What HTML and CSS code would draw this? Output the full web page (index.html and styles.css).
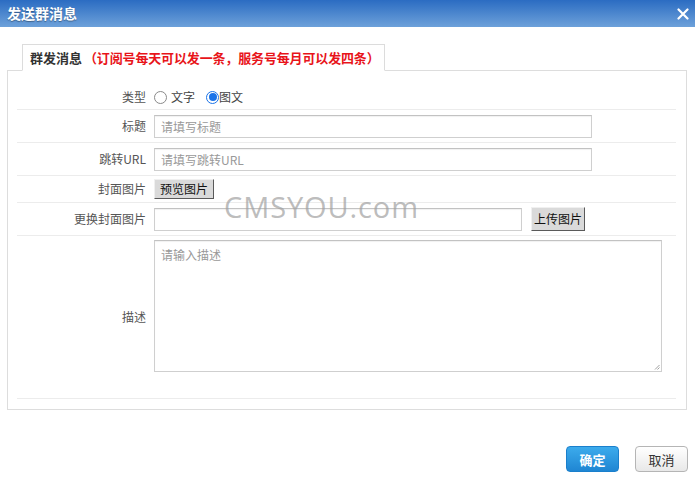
FILE: index.html
```html
<!DOCTYPE html>
<html lang="zh-CN">
<head>
<meta charset="utf-8">
<title>发送群消息</title>
<link rel="stylesheet" href="styles.css">
</head>
<body>
<div class="dialog">
  <div class="titlebar">
    <span class="title">发送群消息</span>
    <svg class="close" width="12" height="12" viewBox="0 0 12 12"><path d="M1.5 1.5 L10.5 10.5 M10.5 1.5 L1.5 10.5" stroke="#fff" stroke-width="2.2" stroke-linecap="round"/></svg>
  </div>
  <div class="body">
    <div class="tabs">
      <div class="tab"><b class="tab-name">群发消息</b><span class="tab-note">（订阅号每天可以发一条，服务号每月可以发四条）</span></div>
    </div>
    <div class="panel">
      <div class="row row-type">
        <div class="label">类型</div>
        <div class="field radios">
          <span class="radio"></span><span class="radio-text">文字</span>
          <span class="radio checked"></span><span class="radio-text tight">图文</span>
        </div>
      </div>
      <div class="row row-input">
        <div class="label">标题</div>
        <div class="field"><div class="input w438"><span class="ph">请填写标题</span></div></div>
      </div>
      <div class="row row-input">
        <div class="label">跳转URL</div>
        <div class="field"><div class="input w438"><span class="ph">请填写跳转URL</span></div></div>
      </div>
      <div class="row row-btn">
        <div class="label">封面图片</div>
        <div class="field"><span class="sysbtn">预览图片</span></div>
      </div>
      <div class="row row-input">
        <div class="label">更换封面图片</div>
        <div class="field upload"><div class="input w368"></div><span class="sysbtn tall">上传图片</span></div>
      </div>
      <div class="row row-desc">
        <div class="label">描述</div>
        <div class="field desc-field"><div class="textarea"><span class="ph">请输入描述</span><svg class="grip" width="6" height="6" viewBox="0 0 6 6"><path d="M5.5 1 L1 5.5 M5.5 3.5 L3.5 5.5" stroke="#888" stroke-width="0.8"/></svg></div></div>
      </div>
    </div>
    <div class="footer">
      <span class="btn primary">确定</span>
      <span class="btn">取消</span>
    </div>
    <div class="watermark">CMSYOU.com</div>
  </div>
</div>
</body>
</html>
```
FILE: styles.css
```css
html, body {
  margin: 0;
  padding: 0;
  background: #fff;
}
body {
  width: 695px;
  height: 479px;
  overflow: hidden;
  font-family: "Noto Sans CJK SC", "Microsoft YaHei", sans-serif;
  font-size: 12px;
  color: #555;
}
.dialog {
  width: 695px;
  height: 479px;
  position: relative;
}
.titlebar {
  height: 27px;
  background: linear-gradient(#2b6cc2, #6da1da);
  display: flex;
  align-items: center;
  justify-content: space-between;
  padding: 0 6px 0 7px;
  box-sizing: border-box;
}
.title {
  color: #fff;
  font-weight: bold;
  font-size: 14px;
  line-height: 27px;
  text-shadow: 0 1px 1px rgba(0,0,0,0.35);
}
.close {
  display: block;
}
.body {
  padding: 17px 7px 0 7px;
  position: relative;
}
.tabs {
  display: flex;
  padding-left: 15px;
  margin-bottom: -1px;
  position: relative;
  z-index: 1;
}
.tab {
  height: 25px;
  border: 1px solid #dcdcdc;
  border-bottom: 1px solid #fff;
  background: #fff;
  padding: 0 4px 0 7px;
  display: flex;
  align-items: center;
  font-size: 13px;
  line-height: 25px;
  white-space: nowrap;
}
.tab-name {
  color: #333;
  font-weight: bold;
}
.tab-note {
  color: #e8141a;
  font-weight: bold;
  margin-left: 2px;
  letter-spacing: -0.15px;
}
.panel {
  border: 1px solid #dddddd;
  padding: 0 10px 10px 9px;
  width: 659px;
}
.row {
  display: flex;
  align-items: center;
  border-bottom: 1px solid #ececec;
}
.label {
  width: 129px;
  text-align: right;
  flex: none;
  color: #555;
  font-size: 12px;
  line-height: 16px;
}
.field {
  margin-left: 8px;
  display: flex;
  align-items: center;
}
.row-type {
  padding: 16px 0 2px;
  height: 20px;
}
.row-input {
  padding: 4px 0 4px;
  height: 24px;
}
.row-btn {
  padding: 3px 0 3px;
  height: 20px;
}
.row-desc {
  height: 162px;
}
.radios {
  line-height: 20px;
  color: #555;
}
.radio {
  width: 13px;
  height: 13px;
  border: 1px solid #8a8a8a;
  border-radius: 50%;
  box-sizing: border-box;
  background: #fff;
  display: inline-block;
  position: relative;
}
.radio.checked {
  border-color: #1a73e8;
  margin-left: 11px;
}
.radio.checked::after {
  content: "";
  position: absolute;
  left: 1.5px;
  top: 1.5px;
  width: 8px;
  height: 8px;
  border-radius: 50%;
  background: #1a73e8;
}
.radio-text {
  margin-left: 4px;
  color: #444;
}
.radio-text.tight {
  margin-left: 0;
}
.input {
  height: 23px;
  box-sizing: border-box;
  border: 1px solid #cfcfcf;
  border-top-color: #c2c2c2;
  box-shadow: inset 0 1px 1px rgba(0,0,0,0.06);
  background: #fff;
  display: flex;
  align-items: center;
  padding-left: 6px;
}
.w438 { width: 438px; }
.w368 { width: 368px; }
.ph {
  color: #999;
  font-size: 12px;
}
.sysbtn {
  display: inline-block;
  height: 20px;
  line-height: 18px;
  box-sizing: border-box;
  padding: 0 5px;
  background: #dadada;
  border: 1px solid;
  border-color: #f0f0f0 #5a5a5a #5a5a5a #f0f0f0;
  color: #111;
  font-size: 12px;
}
.sysbtn.tall {
  height: 24px;
  line-height: 22px;
  padding: 0 2px;
}
.upload {
  gap: 9px;
}
.desc-field {
  align-self: flex-start;
  padding-top: 4px;
}
.textarea {
  width: 508px;
  height: 132px;
  box-sizing: border-box;
  border: 1px solid #cfcfcf;
  border-top-color: #c2c2c2;
  box-shadow: inset 0 1px 1px rgba(0,0,0,0.06);
  padding: 5px 6px;
  position: relative;
}
.grip {
  position: absolute;
  right: 1px;
  bottom: 1px;
}
.footer {
  display: flex;
  justify-content: flex-end;
  gap: 16px;
  padding-top: 36px;
}
.btn {
  width: 53px;
  height: 26px;
  box-sizing: border-box;
  border-radius: 4px;
  display: flex;
  align-items: center;
  justify-content: center;
  font-size: 13px;
  color: #333;
  border: 1px solid #b5b5b5;
  background: linear-gradient(#ffffff, #e8e8e8);
}
.btn.primary {
  color: #fff;
  font-weight: bold;
  border-color: #1a7fcc;
  background: linear-gradient(#3cabec, #1f86d3);
}
.watermark {
  position: absolute;
  left: 224px;
  top: 160px;
  font-family: "Open Sans", "Liberation Sans", sans-serif;
  font-size: 29px;
  letter-spacing: 0.9px;
  color: rgba(160,160,160,0.7);
  pointer-events: none;
}
```
